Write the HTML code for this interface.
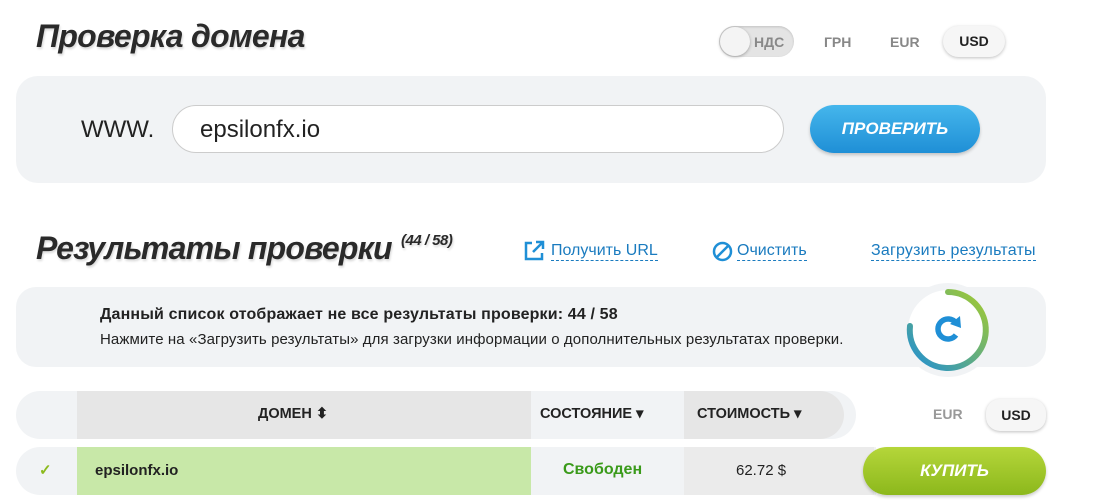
<!DOCTYPE html>
<html><head><meta charset="utf-8"><style>
*{margin:0;padding:0;box-sizing:border-box}
body{width:1098px;height:502px;background:#fff;font-family:"Liberation Sans",sans-serif;position:relative;overflow:hidden;color:#222}
.a{position:absolute}
.h{font-style:italic;font-weight:bold;color:#2a2a2a;text-shadow:1px 2px 2px rgba(0,0,0,.15);letter-spacing:-0.5px}
.lnk{color:#1a7bbf;font-size:16px;border-bottom:1px dashed #1a7bbf;line-height:18px}
</style></head><body>
<div class="a h" style="left:36px;top:18px;font-size:32px;letter-spacing:-0.7px">Проверка домена</div>

<div class="a" style="left:719px;top:26px;width:75px;height:31px;border-radius:16px;background:#e4e4e4;box-shadow:inset 0 1px 2px rgba(0,0,0,.15)"></div>
<div class="a" style="left:720px;top:27px;width:30px;height:29px;border-radius:50%;background:#f4f4f4;box-shadow:0 1px 3px rgba(0,0,0,.3)"></div>
<div class="a" style="left:754px;top:34px;font-size:14px;font-weight:bold;color:#888">НДС</div>
<div class="a" style="left:824px;top:34px;font-size:14px;font-weight:bold;color:#888">ГРН</div>
<div class="a" style="left:890px;top:34px;font-size:14px;font-weight:bold;color:#888">EUR</div>
<div class="a" style="left:943px;top:26px;width:62px;height:31px;border-radius:16px;background:#f6f6f6;box-shadow:0 1px 3px rgba(0,0,0,.25);font-size:14px;font-weight:bold;color:#222;text-align:center;line-height:31px">USD</div>

<div class="a" style="left:16px;top:76px;width:1030px;height:107px;border-radius:22px;background:#f1f3f5"></div>
<div class="a" style="left:81px;top:116px;font-size:24px;color:#222">WWW.</div>
<div class="a" style="left:172px;top:105px;width:612px;height:48px;border-radius:24px;background:#fff;border:1px solid #ccc"></div>
<div class="a" style="left:200px;top:116px;font-size:24px;color:#222">epsilonfx.io</div>
<div class="a" style="left:810px;top:105px;width:170px;height:48px;border-radius:24px;background:linear-gradient(#45b6ec,#1f8fd6);box-shadow:0 2px 3px rgba(0,0,0,.2);color:#fff;font-style:italic;font-weight:bold;font-size:17px;text-align:center;line-height:48px">ПРОВЕРИТЬ</div>

<div class="a h" style="left:36px;top:230px;font-size:32px;letter-spacing:-0.8px">Результаты проверки</div>
<div class="a h" style="left:401px;top:232px;font-size:15px">(44 / 58)</div>

<svg class="a" style="left:523px;top:240px" width="22" height="22" viewBox="0 0 22 22"><path d="M9 3H3v16h16v-6" fill="none" stroke="#1f8fd6" stroke-width="2.5"/><path d="M10 12L19 3M13 2h7v7" fill="none" stroke="#1f8fd6" stroke-width="2.5"/></svg>
<div class="a lnk" style="left:551px;top:242px">Получить URL</div>
<svg class="a" style="left:712px;top:241px" width="21" height="21" viewBox="0 0 21 21"><circle cx="10.5" cy="10.5" r="8.5" fill="none" stroke="#1f8fd6" stroke-width="2.5"/><path d="M5 16L16 5" stroke="#1f8fd6" stroke-width="2.5"/></svg>
<div class="a lnk" style="left:737px;top:242px">Очистить</div>
<div class="a lnk" style="left:871px;top:242px;letter-spacing:0.2px">Загрузить результаты</div>

<div class="a" style="left:16px;top:287px;width:1030px;height:80px;border-radius:20px;background:#f1f3f5"></div>
<div class="a" style="left:100px;top:306px;font-size:16px;font-weight:bold;color:#222;letter-spacing:0.15px">Данный список отображает не все результаты проверки: 44 / 58</div>
<div class="a" style="left:100px;top:331px;font-size:15px;color:#222;letter-spacing:0.1px">Нажмите на «Загрузить результаты» для загрузки информации о дополнительных результатах проверки.</div>
<svg class="a" style="left:898px;top:280px" width="100" height="100" viewBox="0 0 100 100">
<defs><linearGradient id="g" x1="0" y1="1" x2="1" y2="0"><stop offset="0" stop-color="#1f8fd6"/><stop offset="1" stop-color="#a6cc2c"/></linearGradient></defs>
<circle cx="50" cy="50" r="47" fill="#f1f3f5"/>
<circle cx="50" cy="50" r="40" fill="#fff"/>
<path d="M50 12A38 38 0 1 1 12 46" fill="none" stroke="url(#g)" stroke-width="6" stroke-linecap="round"/>
<path d="M58 55A10 10 0 1 1 58 43" fill="none" stroke="#1f8fd6" stroke-width="5.5"/>
<path d="M52 44L62 36L63 48Z" fill="#1f8fd6"/>
</svg>

<div class="a" style="left:16px;top:391px;width:840px;height:48px;border-radius:24px;background:#f1f3f5"></div>
<div class="a" style="left:77px;top:391px;width:454px;height:48px;background:#e6e6e6"></div>
<div class="a" style="left:684px;top:391px;width:160px;height:48px;background:#e6e6e6;border-radius:0 24px 24px 0"></div>
<div class="a" style="left:258px;top:406px;font-size:14.5px;font-weight:bold;color:#222">ДОМЕН ⬍</div>
<div class="a" style="left:540px;top:406px;font-size:14.5px;font-weight:bold;color:#222">СОСТОЯНИЕ ▾</div>
<div class="a" style="left:697px;top:406px;font-size:14.5px;font-weight:bold;color:#222">СТОИМОСТЬ ▾</div>
<div class="a" style="left:933px;top:406px;font-size:14px;font-weight:bold;color:#999">EUR</div>
<div class="a" style="left:986px;top:399px;width:60px;height:32px;border-radius:14px;background:#f6f6f6;box-shadow:0 1px 3px rgba(0,0,0,.25);font-size:14px;font-weight:bold;text-align:center;line-height:32px">USD</div>

<div class="a" style="left:16px;top:447px;width:860px;height:48px;border-radius:24px 0 0 24px;background:#f1f3f5"></div>
<div class="a" style="left:77px;top:447px;width:454px;height:48px;background:#c8e8a8"></div>
<div class="a" style="left:684px;top:447px;width:190px;height:48px;background:#ebebeb"></div>
<div class="a" style="left:39px;top:461px;font-size:15px;font-weight:bold;color:#8cba1e">✓</div>
<div class="a" style="left:95px;top:462px;font-size:15px;font-weight:bold;color:#222">epsilonfx.io</div>
<div class="a" style="left:563px;top:461px;font-size:16px;font-weight:bold;color:#3a9a1a">Свободен</div>
<div class="a" style="left:736px;top:462px;font-size:15px;color:#222">62.72 $</div>
<div class="a" style="left:863px;top:447px;width:183px;height:48px;border-radius:24px;background:linear-gradient(#b5d63a,#8cb81c);box-shadow:0 2px 3px rgba(0,0,0,.2);color:#fff;font-style:italic;font-weight:bold;font-size:17px;text-align:center;line-height:48px">КУПИТЬ</div>
</body></html>
